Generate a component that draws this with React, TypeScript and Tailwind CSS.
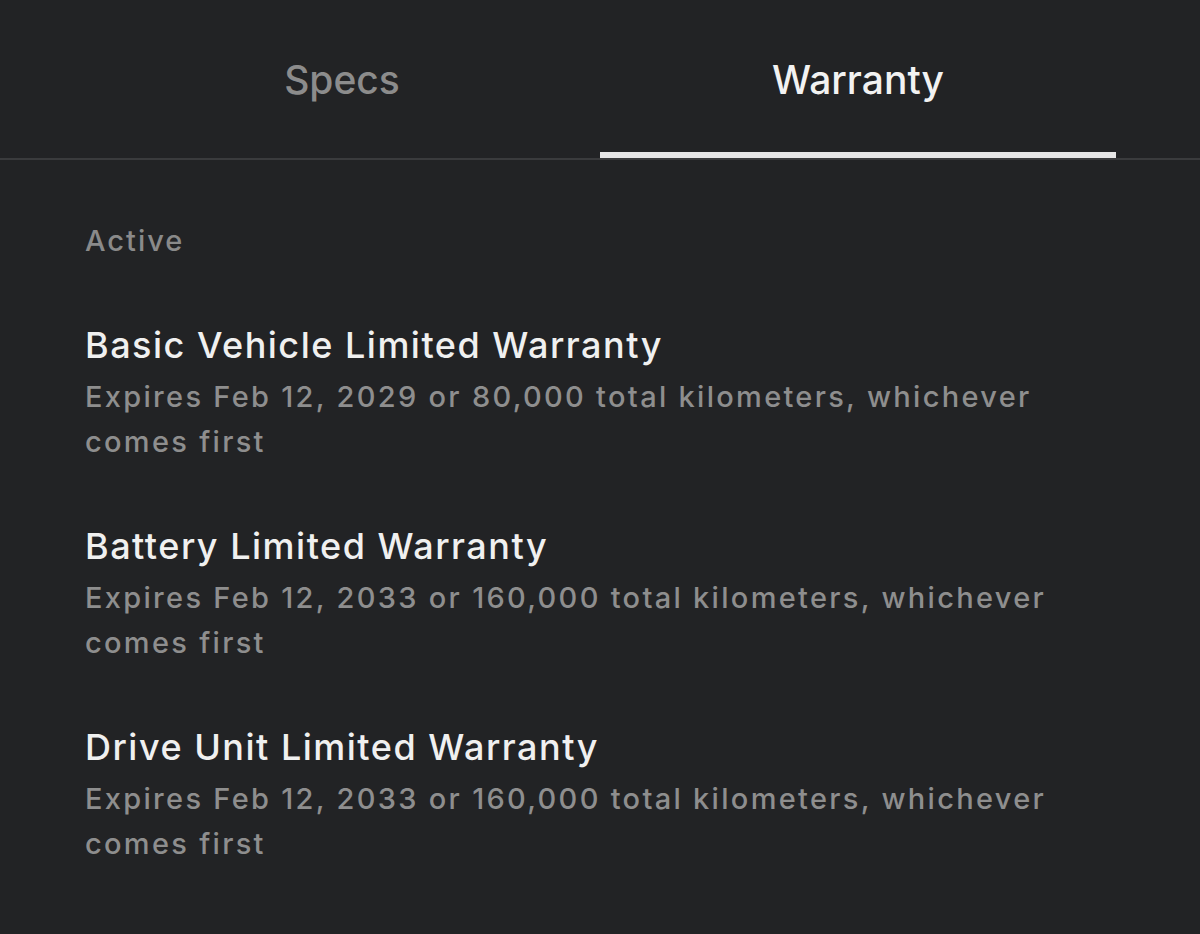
import React from "react";

const items = [
  {
    title: "Basic Vehicle Limited Warranty",
    sub: "Expires Feb 12, 2029 or 80,000 total kilometers, whichever comes first",
  },
  {
    title: "Battery Limited Warranty",
    sub: "Expires Feb 12, 2033 or 160,000 total kilometers, whichever comes first",
  },
  {
    title: "Drive Unit Limited Warranty",
    sub: "Expires Feb 12, 2033 or 160,000 total kilometers, whichever comes first",
  },
];

export default function App() {
  return (
    <div
      className="w-[1200px] h-[934px] bg-[#222325] overflow-hidden"
      style={{ fontFamily: "Inter, 'Noto Sans', sans-serif" }}
    >
      <div className="flex px-[84px] border-b-2 border-[#3a3b3d]">
        <div className="flex-1 flex flex-col items-center pt-[56px]">
          <span className="text-[39px] leading-[48px] font-medium text-[#8c8c8c]">Specs</span>
          <div className="mt-[48px] h-[6px] w-full" />
        </div>
        <div className="flex-1 flex flex-col items-center pt-[56px]">
          <span className="text-[39px] leading-[48px] font-medium text-[#f2f2f2]">Warranty</span>
          <div className="mt-[48px] h-[6px] w-full bg-[#e6e6e6]" />
        </div>
      </div>
      <div className="px-[85px] pt-[63px]">
        <div className="text-[29px] leading-[36px] font-medium tracking-[2px] text-[#8a8a8a]">
          Active
        </div>
        <div className="flex flex-col gap-[60px] mt-[64px]">
          {items.map((it) => (
            <div key={it.title} className="flex flex-col gap-[7px]">
              <div className="text-[36px] leading-[44px] font-medium tracking-[1.5px] text-[#f0f0f0]">
                {it.title}
              </div>
              <div className="text-[29px] leading-[45px] font-medium tracking-[2.3px] text-[#8e8e8e]">
                {it.sub}
              </div>
            </div>
          ))}
        </div>
      </div>
    </div>
  );
}
